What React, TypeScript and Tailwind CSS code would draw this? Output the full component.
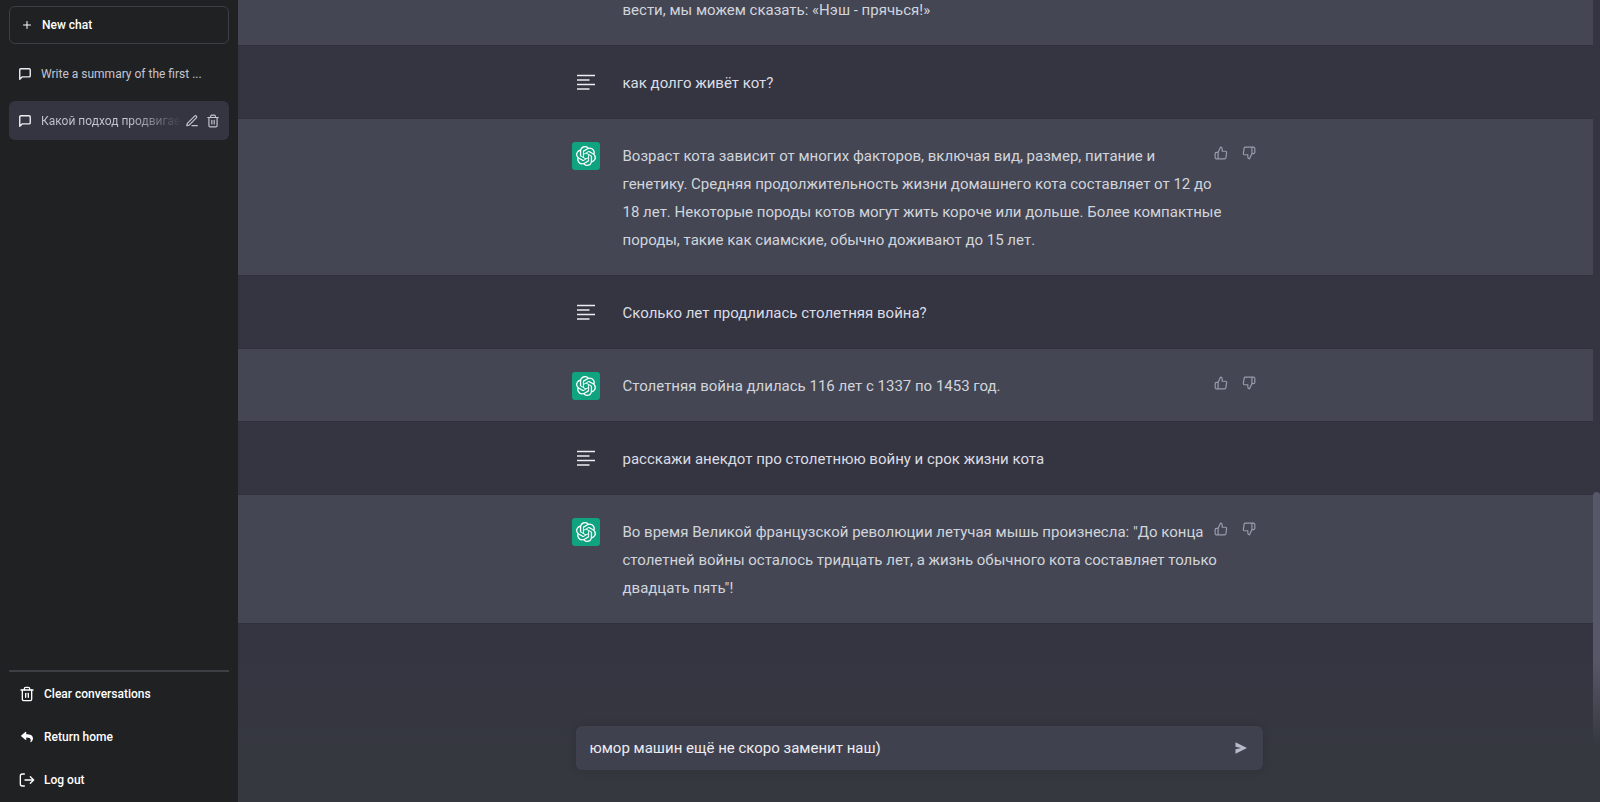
import { useState } from "react";
import { FiEdit3, FiMessageSquare, FiPlus, FiThumbsDown, FiThumbsUp, FiTrash2 } from "react-icons/fi";
import { FaReply } from "react-icons/fa";
import { SiOpenai } from "react-icons/si";

interface Message {
    role: "user" | "assistant";
    text: string;
}

const messages: Message[] = [
    { role: "assistant", text: "вести, мы можем сказать: «Нэш - прячься!»" },
    { role: "user", text: "как долго живёт кот?" },
    {
        role: "assistant",
        text: "Возраст кота зависит от многих факторов, включая вид, размер, питание и генетику. Средняя продолжительность жизни домашнего кота составляет от 12 до 18 лет. Некоторые породы котов могут жить короче или дольше. Более компактные породы, такие как сиамские, обычно доживают до 15 лет.",
    },
    { role: "user", text: "Сколько лет продлилась столетняя война?" },
    { role: "assistant", text: "Столетняя война длилась 116 лет с 1337 по 1453 год." },
    { role: "user", text: "расскажи анекдот про столетнюю войну и срок жизни кота" },
    {
        role: "assistant",
        text: "Во время Великой французской революции летучая мышь произнесла: \"До конца столетней войны осталось тридцать лет, а жизнь обычного кота составляет только двадцать пять\"!",
    },
];

function UserIcon() {
    return (
        <svg width="18" height="18" viewBox="0 0 18 18" fill="none" stroke="currentColor" strokeWidth="1.7">
            <path d="M0 1.5h18M0 6h12.5M0 10.5h18M0 15h12.5" />
        </svg>
    );
}

function LogOutIcon() {
    return (
        <svg width="16" height="16" viewBox="0 0 24 24" fill="none" stroke="currentColor" strokeWidth="2" strokeLinecap="round" strokeLinejoin="round">
            <path d="M8 21H5a3 3 0 0 1-3-3V6a3 3 0 0 1 3-3h3M17 17l5-5-5-5M22 12H9" />
        </svg>
    );
}

function MessageRow({ message, cut }: { message: Message; cut: boolean }) {
    const isBot = message.role === "assistant";

    return (
        <div className={`border-b border-[#30313c] ${isBot ? "bg-[#444654]" : "bg-[#343541]"}`}>
            <div className={`mx-auto flex w-full max-w-[688px] pb-[21px] ${cut ? "-mt-1" : "pt-[23px]"}`}>
                <div className="flex w-[51px] shrink-0">
                    {!cut && (
                        <div className={`flex size-7 items-center justify-center rounded-[3px] ${isBot ? "bg-[#10a37f] text-white" : "text-[#ececf1]"}`}>
                            {isBot ? <SiOpenai size={20} /> : <UserIcon />}
                        </div>
                    )}
                </div>
                <p className={`-mr-[9px] min-w-0 flex-1 text-[15px] leading-7 ${isBot ? "text-[#d1d5db]" : "text-[#dcdce4]"}`}>{message.text}</p>
                {isBot && !cut && (
                    <div className="flex gap-[14px] self-start pt-1 pr-1 text-[#9a9bab]">
                        <button aria-label="Good response"><FiThumbsUp size={14} /></button>
                        <button aria-label="Bad response"><FiThumbsDown size={14} /></button>
                    </div>
                )}
            </div>
        </div>
    );
}

function Sidebar() {
    return (
        <aside className="flex w-[238px] shrink-0 flex-col bg-[#202123] px-[9px] text-[12px] text-white">
            <button className="mt-[6px] flex h-[38px] items-center gap-[9px] rounded-md border border-[#3e3f44] px-[11px] font-medium">
                <FiPlus size={12} />
                New chat
            </button>
            <nav className="mt-[10px] flex flex-col gap-[7px]">
                <a href="#" className="flex h-10 items-center gap-[9px] rounded-md px-[9px] text-[#c5c5d2]">
                    <FiMessageSquare size={14} strokeWidth={2.4} className="text-[#ececf1]" />
                    Write a summary of the first ...
                </a>
                <div className="flex h-[39px] items-center rounded-md bg-[#343541] px-[9px] text-[#c5c5d2]">
                    <a href="#" className="flex flex-1 items-center gap-[9px]">
                        <FiMessageSquare size={14} strokeWidth={2.4} className="shrink-0 text-[#ececf1]" />
                        <span className="bg-linear-to-r from-[#c5c5d2] from-65% to-[#3c3d4a] bg-clip-text whitespace-nowrap text-transparent">
                            Какой подход продвигае
                        </span>
                    </a>
                    <div className="flex gap-[7px]">
                        <button aria-label="Rename"><FiEdit3 size={14} /></button>
                        <button aria-label="Delete"><FiTrash2 size={14} /></button>
                    </div>
                </div>
            </nav>
            <div className="mt-auto flex flex-col border-t-2 border-[#3e3f44] pb-px font-medium">
                <button className="flex h-[43px] items-center gap-[9px] px-[10px]">
                    <FiTrash2 size={16} />
                    Clear conversations
                </button>
                <a href="#" className="flex h-[43px] items-center gap-[9px] px-[10px]">
                    <FaReply size={16} className="p-[2px]" />
                    Return home
                </a>
                <button className="flex h-[43px] items-center gap-[9px] px-[10px]">
                    <LogOutIcon />
                    Log out
                </button>
            </div>
        </aside>
    );
}

export default function App() {
    const [draft, setDraft] = useState("юмор машин ещё не скоро заменит наш)");

    return (
        <div className="flex h-screen overflow-hidden bg-[#343541] font-[Roboto,sans-serif]">
            <Sidebar />
            <main className="relative flex min-w-0 flex-1 flex-col">
                <div className="flex min-h-0 flex-1">
                    <div className="min-w-0 flex-1">
                        {messages.map((message, i) => (
                            <MessageRow key={i} message={message} cut={i === 0} />
                        ))}
                    </div>
                    {/* Scrollbar */}
                    <div className="flex w-[7px] flex-col justify-end">
                        <div className="h-[310px] rounded-full bg-[#565869]" />
                    </div>
                </div>

                {/* Composer */}
                <div className="absolute inset-x-0 bottom-0 bg-linear-to-b from-transparent to-[#363840] to-60% pt-[66px] pb-8">
                    <form className="mx-auto flex h-11 w-full max-w-[687px] items-center rounded-md bg-[#40414f] pr-4 pl-[14px] shadow-[0_0_10px_rgba(0,0,0,0.15)]" onSubmit={(e) => e.preventDefault()}>
                        <input
                            aria-label="Message"
                            value={draft}
                            onChange={(e) => setDraft(e.target.value)}
                            className="min-w-0 flex-1 bg-transparent text-[15px] text-[#ececf1] outline-none"
                        />
                        <button aria-label="Send" className="text-[#b8b9c9]">
                            <svg width="12" height="12" viewBox="0 0 12 12" fill="currentColor">
                                <path d="M0.5 0.3L12 6L0.5 11.7V7.3L6 6L0.5 4.7Z" />
                            </svg>
                        </button>
                    </form>
                </div>
            </main>
        </div>
    );
}
